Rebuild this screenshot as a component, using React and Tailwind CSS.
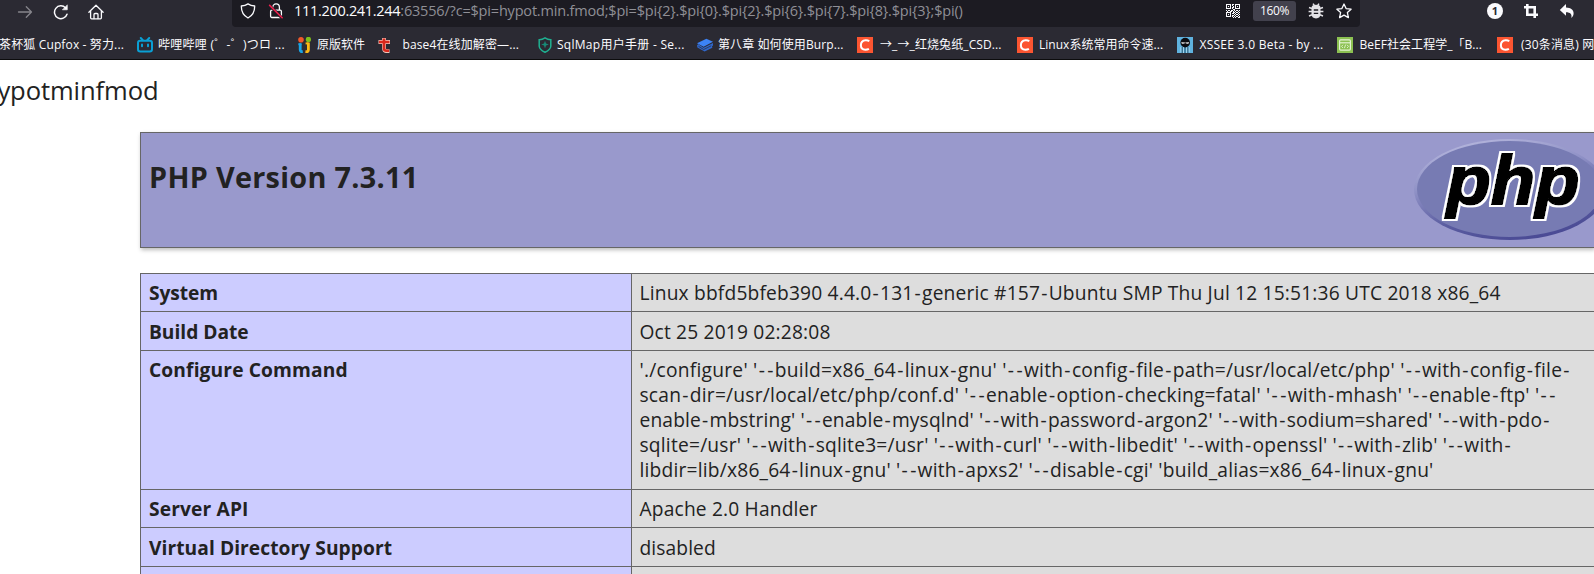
import { Fragment } from 'react';

function Dashed({ text }) {
  return text.split('-').map((part, i) => (
    <Fragment key={i}>
      {i > 0 && <span className="px-[1.1px]">-</span>}
      {part}
    </Fragment>
  ));
}

function BiliIcon() {
  return (
    <svg width="16" height="16" viewBox="0 0 16 16" fill="none" stroke="#0aa0d5" strokeWidth="2" strokeLinecap="round">
      <rect x="1" y="3.8" width="14" height="10.6" rx="2.2" />
      <path d="M3.8 1l2 2.2M12.2 1l-2 2.2M5 7.6v1.6M11 7.6v1.6" />
    </svg>
  );
}

function TwinsIcon() {
  return (
    <svg width="16" height="16" viewBox="0 0 16 16">
      <circle cx="4" cy="2.8" r="2.8" fill="#f0582a" />
      <circle cx="11.4" cy="2.4" r="2.6" fill="#7fbf1c" />
      <path d="M3.2 6.5v6.3q0 2 2.6 1.8" fill="none" stroke="#19a5e6" strokeWidth="2.8" />
      <path d="M1.4 7.2h3" stroke="#19a5e6" strokeWidth="2" />
      <path d="M11.4 5.5v7.5q0 2-3 1.7" fill="none" stroke="#fcb813" strokeWidth="2.8" />
      <path d="M8.6 6.4h3" stroke="#fcb813" strokeWidth="2" />
    </svg>
  );
}

function ToolIcon() {
  return (
    <svg width="16" height="16" viewBox="0 0 16 16" fill="none">
      <path d="M1.5 5h11.500M7 1v10.200q0 3 3 3h2.500" stroke="#f3c3b8" strokeWidth="3.800" />
      <path d="M2 5h10.500M7 1.500v9.700q0 2.500 2.500 2.500H12" stroke="#d8281c" strokeWidth="2.600" />
    </svg>
  );
}

function SqlShieldIcon() {
  return (
    <svg width="16" height="16" viewBox="0 0 16 16" fill="none">
      <path d="M8 .9C6 2.2 4 2.7 2.2 2.8v6.4C2.4 12 5 13.800 8 15.200c3-1.400 5.600-3.200 5.800-6V2.800C12 2.700 10 2.200 8 .9z" stroke="#1fb091" strokeWidth="1.500" />
      <path d="M8 3.800l1 2.700 2.800 1L9 8.600 8 11.600 7 8.600 4.200 7.500 7 6.500z" fill="#178a76" />
    </svg>
  );
}

function BookIcon() {
  return (
    <svg width="16" height="16" viewBox="0 0 16 16">
      <path d="M0 8.500l1.200-1.500 5.300 3.800L16 6v2.600l-1 .6.4 1.600-7.800 3.600L.4 10.600z" fill="#2f66c9" />
      <path d="M1.500 9.300l5.200 3.200 7.500-3.700" fill="none" stroke="#2b2a33" strokeWidth=".7" />
      <path d="M0 6.300L9.400 1.800l6.600 3L6.600 9.800z" fill="#3c83f6" />
    </svg>
  );
}

function CsdnIcon() {
  return (
    <svg width="16" height="16" viewBox="0 0 16 16">
      <rect width="16" height="16" fill="#fc5531" />
      <path d="M12.300 4.300C11.200 3.500 9.900 3.200 8.600 3.300 5.600 3.500 3.900 5.700 3.900 8.300c0 2.700 1.700 4.400 4.400 4.400 1.400 0 2.600-.3 3.600-.9" fill="none" stroke="#fff" strokeWidth="2" />
    </svg>
  );
}

function XsseeIcon() {
  return (
    <svg width="16" height="16" viewBox="0 0 16 16">
      <rect width="16" height="16" fill="#5fb2df" />
      <path d="M4 10v5.500M6.300 10v6M9.800 10v6M12 10v5.500" stroke="#bfe3f5" strokeWidth=".9" />
      <path d="M5.200 10v6M8 10v6M10.900 10v6" stroke="#20506b" strokeWidth="1" />
      <ellipse cx="8.200" cy="5.600" rx="4.800" ry="4.900" fill="#0c0c10" />
      <path d="M4.200 5.200q2 0 3.600.4l.4.300.4-.3q1.600-.4 3.600-.4-.3 1.500-1.600 1.600-1.300 0-2.400-.8-1.100.8-2.400.8-1.300-.1-1.600-1.600z" fill="#fff" />
    </svg>
  );
}

function BeefIcon() {
  return (
    <svg width="16" height="16" viewBox="0 0 16 16" fill="none" stroke="#e5f4d4">
      <rect width="16" height="16" fill="#8cc152" stroke="none" />
      <rect x="2.600" y="2.900" width="10.800" height="10.200" rx="1" strokeWidth="1.200" />
      <path d="M2.600 5.800h10.800" strokeWidth="1.200" />
      <path d="M6 7.800L4.500 9.400 6 11M10 7.800l1.500 1.600L10 11M8.600 7.600l-1.200 3.600" strokeWidth=".9" />
    </svg>
  );
}

const bookmarks = [
  { icon: <BiliIcon />, label: '哔哩哔哩 (゜-゜)つロ ...', width: 'w-[160px]', text: 'pl-[5px] tracking-[0.27px]' },
  { icon: <TwinsIcon />, label: '原版软件', width: 'w-[80px]', text: 'pl-[4px]' },
  { icon: <ToolIcon />, label: 'base4在线加解密—...', width: 'w-[160px]', text: 'pl-[9.5px] tracking-[0.12px]' },
  { icon: <SqlShieldIcon />, label: 'SqlMap用户手册 - Se...', width: 'w-[160px]', text: 'pl-[4px] tracking-[0.28px]' },
  { icon: <BookIcon />, label: '第八章 如何使用Burp...', width: 'w-[160px]', text: 'pl-[5px] tracking-[0.1px]' },
  { icon: <CsdnIcon />, label: '→_→_红烧兔纸_CSD...', width: 'w-[160px]', text: 'pl-[7px] tracking-[0.1px]' },
  { icon: <CsdnIcon />, label: 'Linux系统常用命令速...', width: 'w-[160px]', text: 'pl-[6px] tracking-[0.02px]' },
  { icon: <XsseeIcon />, label: 'XSSEE 3.0 Beta - by ...', width: 'w-[160px]', text: 'pl-[6.5px] tracking-[0.26px]' },
  { icon: <BeefIcon />, label: 'BeEF社会工程学_「B...', width: 'w-[160px]', text: 'pl-[6.5px] tracking-[0.04px]' },
  { icon: <CsdnIcon />, label: '(30条消息) 网', width: 'w-[97px]', text: 'pl-[8px] tracking-[0.17px]' },
];

const QR_ROWS = [
  '11111011011111',
  '10001010010001',
  '10101001010101',
  '10001011010001',
  '11111010011111',
  '00000001100000',
  '10110110101101',
  '01001101010010',
  '11111001101101',
  '10001011010010',
  '10101000101101',
  '10001011010010',
  '11111010101101',
  '00000001010011',
];

function QrIcon() {
  return (
    <svg width="14" height="14" viewBox="0 0 14 14" fill="#fbfbfe" shapeRendering="crispEdges">
      {QR_ROWS.map((row, y) =>
        [...row].map((c, x) => (c === '1' ? <rect key={`${x}-${y}`} x={x} y={y} width="1" height="1" /> : null))
      )}
    </svg>
  );
}

function NavBar() {
  return (
    <div className="flex h-[29px] items-start">
      <div className="flex h-[23px] w-[232px] items-center pl-[17px]">
        <svg width="16" height="16" viewBox="0 0 16 16" fill="none" stroke="#86858c" strokeWidth="1.300" strokeLinecap="round" strokeLinejoin="round">
          <path d="M1.500 8h13M9.300 2.800L14.500 8l-5.200 5.200" />
        </svg>
        <svg className="ml-5" width="16" height="16" viewBox="0 0 16 16" fill="none" stroke="#fbfbfe" strokeWidth="1.500" strokeLinecap="round">
          <path d="M14 10.200A6.400 6.400 0 1 1 12.600 3.900" />
          <path d="M14.300 1.200v4.600H9.700z" fill="#fbfbfe" stroke="#fbfbfe" strokeWidth=".6" strokeLinejoin="round" />
        </svg>
        <svg className="ml-[19px]" width="16" height="16" viewBox="0 0 16 16" fill="none" stroke="#fbfbfe" strokeWidth="1.300" strokeLinecap="round" strokeLinejoin="round">
          <path d="M.9 8.200L8 1.200l7.100 7M2.600 7v6.800q0 1 1 1h8.800q1 0 1-1V7" />
          <path d="M6 14.500v-4q0-1 1-1h2q1 0 1 1v4" />
        </svg>
      </div>
      <div className="flex h-[27px] w-[1128px] items-start rounded-b bg-[#1c1b22]">
        <div className="flex h-[22px] w-full items-center pl-[8px]">
          <svg width="16" height="16" viewBox="0 0 16 16" fill="none" stroke="#fbfbfe" strokeWidth="1.300" strokeLinejoin="round">
            <path d="M8 .9C6.200 2.200 3.800 2.900 1.300 3c0 5.200 1.400 9.300 6.700 12 5.300-2.700 6.700-6.800 6.700-12C12.200 2.900 9.800 2.200 8 .9z" />
          </svg>
          <svg className="ml-3" width="16" height="16" viewBox="0 0 16 16" fill="none">
            <path d="M4.800 7V4.200a3.300 3.300 0 0 1 6.600 0V7" stroke="#fbfbfe" strokeWidth="1.300" />
            <rect x="2.600" y="7.200" width="10.800" height="7.300" rx="1.200" stroke="#fbfbfe" strokeWidth="1.300" />
            <path d="M1.500 2.500l13 13" stroke="#1c1b22" strokeWidth="3" />
            <path d="M1.200 1.900l13.400 13.400" stroke="#f0204f" strokeWidth="1.500" />
          </svg>
          <div className="ml-[10px] flex w-[926px] text-[14.5px] leading-[22px] whitespace-pre">
            <span className="tracking-[-0.31px] text-[#fbfbfe]">111.200.241.244</span>
            <span className="tracking-[-0.185px] text-[#8f8f96]">
              {':63556/?c=$pi=hypot.min.fmod;$pi=$pi{2}.$pi{0}.$pi{2}.$pi{6}.$pi{7}.$pi{8}.$pi{3};$pi()'}
            </span>
          </div>
          <div className="ml-[6px] flex items-center">
            <QrIcon />
            <div className="ml-[13px] flex h-5 w-[43px] items-center justify-center rounded-[3px] bg-[#42414d] text-[12px] tracking-[-0.35px] text-[#fbfbfe]">
              160%
            </div>
            <svg className="ml-3" width="16" height="16" viewBox="0 0 16 16" fill="none" stroke="#e3e2e6" strokeWidth="1.500">
              <path d="M5 .6l1.500 2M11 .6l-1.500 2M1 4.500l3 1M15 4.500l-3 1M.6 8.500H4M15.400 8.500H12M1 13l3-1.200M15 13l-3-1.200" />
              <path d="M3.500 5q0-3.200 4.500-3.200t4.500 3.200v6q0 4-4.500 4.600Q3.500 15 3.500 11z" fill="#e3e2e6" stroke="none" />
              <path d="M5.800 7h4.400M5.800 10.300h4.400" stroke="#1c1b22" strokeWidth="1.300" />
            </svg>
            <svg className="ml-3" width="16" height="16" viewBox="0 0 16 16" fill="none" stroke="#fbfbfe" strokeWidth="1.300" strokeLinejoin="round">
              <path d="M8 1l2.100 4.600 5 .6-3.700 3.400 1 5L8 12.100l-4.400 2.500 1-5L.9 6.200l5-.6z" />
            </svg>
          </div>
        </div>
      </div>
      <div className="flex h-[22px] items-center pl-[127px]">
        <div className="flex size-4 items-center justify-center rounded-full bg-[#fbfbfe] text-[11px] leading-4 font-bold text-[#2b2a33]">1</div>
        <svg className="ml-5" width="16" height="16" viewBox="0 0 16 16" fill="none" stroke="#fbfbfe" strokeWidth="2.600">
          <path d="M1 4.300h10.700V15M4.300 1v10.700H15" />
        </svg>
        <svg className="ml-5" width="16" height="16" viewBox="0 0 16 16" fill="#fbfbfe">
          <path d="M7 1v3.400c5 .2 7.600 2.300 7.600 5.800 0 2-.9 3.700-2.300 4.700.9-3.700-.9-5.500-5.300-5.600v3.400L.8 6.900z" />
        </svg>
      </div>
    </div>
  );
}

function BookmarksBar() {
  return (
    <div className="flex h-[31px] items-center border-b border-[#0c0c0d] pt-[2px] text-[12px] leading-4 whitespace-pre text-[#fbfbfe]">
      <div className="w-[137px] shrink-0">
        <span className="-ml-px tracking-[0.14px]">茶杯狐 Cupfox - 努力...</span>
      </div>
      {bookmarks.map((b, i) => (
        <div key={i} className={`flex shrink-0 items-center overflow-hidden ${b.width}`}>
          <span className="shrink-0">{b.icon}</span>
          <span className={b.text}>{b.label}</span>
        </div>
      ))}
    </div>
  );
}

function PhpLogo() {
  return (
    <svg width="192" height="104" viewBox="0 0 192 104" className="shrink-0">
      <defs>
        <linearGradient id="rim" x1="0.3" y1="0" x2="0.7" y2="1">
          <stop offset="0" stopColor="#b4b5dc" />
          <stop offset="0.35" stopColor="#8f91c6" />
          <stop offset="0.7" stopColor="#5a5ca0" />
          <stop offset="1" stopColor="#484893" />
        </linearGradient>
        <filter id="halo" x="-10%" y="-10%" width="120%" height="120%">
          <feMorphology in="SourceAlpha" operator="dilate" radius="2" result="grown" />
          <feGaussianBlur in="grown" stdDeviation="0.5" result="soft" />
          <feFlood floodColor="#fff" />
          <feComposite in2="soft" operator="in" result="edge" />
          <feMerge>
            <feMergeNode in="edge" />
            <feMergeNode in="SourceGraphic" />
          </feMerge>
        </filter>
      </defs>
      <ellipse cx="96" cy="51.500" rx="96" ry="50.500" fill="url(#rim)" />
      <ellipse cx="95.500" cy="51" rx="92.500" ry="48" fill="#777bb3" />
      <text
        x="32.500"
        y="65.500"
        textLength="133"
        lengthAdjust="spacingAndGlyphs"
        fontFamily="Liberation Sans"
        fontSize="69"
        fontWeight="700"
        fontStyle="italic"
        fill="#000"
        stroke="#000"
        strokeWidth="1.800"
        filter="url(#halo)"
      >
        php
      </text>
    </svg>
  );
}

const rows = [
  {
    label: 'System',
    height: 'h-[38px] pt-[6px]',
    tracking: 'tracking-[-0.08px]',
    lines: [['Linux bbfd5bfeb390 4.4.0-131-generic #157-Ubuntu SMP Thu Jul 12 15:51:36 UTC 2018 x86_64', 'tracking-[0.18px]']],
  },
  {
    label: 'Build Date',
    height: 'h-[39px] pt-[7px]',
    tracking: 'tracking-[-0.02px]',
    lines: [['Oct 25 2019 02:28:08', 'tracking-[0.17px]']],
  },
  {
    label: 'Configure Command',
    height: 'h-[139px] pt-[6px]',
    tracking: 'tracking-[0.12px]',
    lines: [
      ["'./configure' '--build=x86_64-linux-gnu' '--with-config-file-path=/usr/local/etc/php' '--with-config-file-", 'tracking-[0.25px]'],
      ["scan-dir=/usr/local/etc/php/conf.d' '--enable-option-checking=fatal' '--with-mhash' '--enable-ftp' '--", 'tracking-[0.23px]'],
      ["enable-mbstring' '--enable-mysqlnd' '--with-password-argon2' '--with-sodium=shared' '--with-pdo-", 'tracking-[0.15px]'],
      ["sqlite=/usr' '--with-sqlite3=/usr' '--with-curl' '--with-libedit' '--with-openssl' '--with-zlib' '--with-", 'tracking-[0.21px]'],
      ["libdir=lib/x86_64-linux-gnu' '--with-apxs2' '--disable-cgi' 'build_alias=x86_64-linux-gnu'", 'tracking-[0.2px]'],
    ],
  },
  {
    label: 'Server API',
    height: 'h-[38px] pt-[6px]',
    tracking: 'tracking-[0.14px]',
    lines: [['Apache 2.0 Handler', 'tracking-[0.17px]']],
  },
  {
    label: 'Virtual Directory Support',
    height: 'h-[39px] pt-[7px]',
    tracking: 'tracking-[0.06px]',
    lines: [['disabled', 'tracking-[0.1px]']],
  },
  { label: '', height: 'h-[38px]', tracking: '', lines: [] },
];

function InfoTable() {
  return (
    <div className="mt-[25px] ml-[140px] border-l border-[#666] text-[19.2px] leading-[25px] whitespace-pre">
      {rows.map((row, i) => (
        <div key={i} className="flex">
          <div className={`w-[490px] shrink-0 border-t border-[#666] bg-[#ccccff] pl-[8px] font-bold ${row.height} ${row.tracking}`}>
            {row.label}
          </div>
          <div className={`flex-1 border-t border-l border-[#666] bg-[#dddddd] pl-[7.5px] ${row.height}`}>
            {row.lines.map(([text, tracking]) => (
              <div key={text} className={tracking}>
                <Dashed text={text} />
              </div>
            ))}
          </div>
        </div>
      ))}
    </div>
  );
}

export default function App() {
  return (
    <div className="h-[574px] w-[1594px] overflow-hidden bg-white font-['Open_Sans','Noto_Sans_CJK_SC',sans-serif] text-[#222222]">
      <div className="bg-[#2b2a33]">
        <NavBar />
        <BookmarksBar />
      </div>
      <div className="flex h-[72px] w-[158.5px] justify-end pt-[14px] text-[25.6px] leading-[34px] tracking-[-0.1px]">ypotminfmod</div>
      <div className="ml-[140px] flex h-[116px] justify-between overflow-visible border border-r-0 border-[#666] bg-[#9999cc] shadow-[1px_2px_4px_#bbbbbb]">
        <h1 className="pt-[24px] pl-[8px] text-[28.8px] leading-[40px] font-bold tracking-[0.3px]">PHP Version 7.3.11</h1>
        <div className="mr-[-12px] pt-[5px]">
          <PhpLogo />
        </div>
      </div>
      <InfoTable />
    </div>
  );
}
